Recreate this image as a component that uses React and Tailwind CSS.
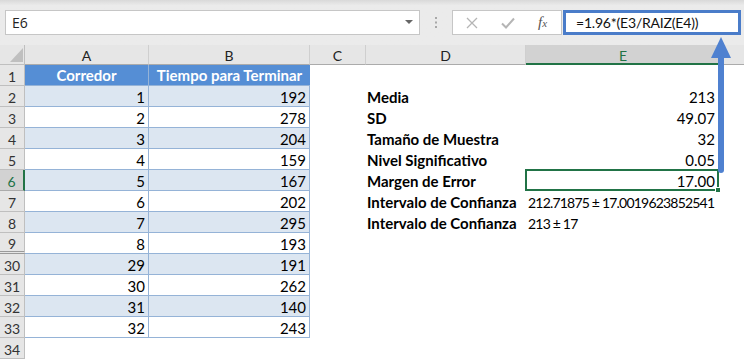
import React from "react";

const rows = [
  { n: 2, a: "1", b: "192", d: "Media", e: "213", band: true },
  { n: 3, a: "2", b: "278", d: "SD", e: "49.07" },
  { n: 4, a: "3", b: "204", d: "Tamaño de Muestra", e: "32", band: true },
  { n: 5, a: "4", b: "159", d: "Nivel Significativo", e: "0.05" },
  { n: 6, a: "5", b: "167", d: "Margen de Error", e: "17.00", band: true, sel: true },
  { n: 7, a: "6", b: "202", d: "Intervalo de Confianza", e: "212.71875 ± 17.0019623852541", left: true },
  { n: 8, a: "7", b: "295", d: "Intervalo de Confianza", e: "213 ± 17", left: true, band: true },
  { n: 9, a: "8", b: "193", hidden: true },
  { n: 30, a: "29", b: "191", band: true },
  { n: 31, a: "30", b: "262" },
  { n: 32, a: "31", b: "140", band: true },
  { n: 33, a: "32", b: "243" },
];

const cellFont = { fontFamily: "Lato, 'Open Sans', sans-serif" };

function RowHeader({ n, sel, hidden }) {
  return (
    <div
      className={
        "w-[25px] shrink-0 flex items-center justify-center text-[14px] border-b border-r " +
        (sel
          ? "bg-[#d2d2d2] text-[#217346] border-r-[#217346] border-r-2 border-b-[#ababab]"
          : "bg-[#e6e6e6] text-[#333] border-[#bfbfbf]") +
        (hidden ? " border-b-[3px] border-double border-b-[#9a9a9a]" : "")
      }
      style={cellFont}
    >
      <span className="pt-[2px]">{n}</span>
    </div>
  );
}

export default function App() {
  return (
    <div
      className="relative w-[744px] h-[359px] overflow-hidden bg-white text-black"
      style={cellFont}
    >
      {/* top formula bar */}
      <div className="h-[45px] bg-gradient-to-b from-[#d9d9d9] via-[#ebebeb] via-[12%] to-[#ebebeb] flex items-start pt-[10px] pl-[5px]">
        <div
          className="w-[415px] h-[25px] bg-white border border-[#c6c6c6] flex items-center justify-between pl-[6px] pr-[6px] text-[14px] text-[#222]"
          style={{ fontFamily: "'Open Sans', sans-serif" }}
        >
          <span>E6</span>
          <svg width="8" height="5" viewBox="0 0 8 5">
            <path d="M0 0 L8 0 L4 4 Z" fill="#666" />
          </svg>
        </div>
        <div className="w-[32px] h-[25px] flex items-center justify-center">
          <svg width="4" height="13" viewBox="0 0 4 13">
            <rect x="1" y="1" width="2" height="2" fill="#a8a8a8" />
            <rect x="1" y="5.5" width="2" height="2" fill="#a8a8a8" />
            <rect x="1" y="10" width="2" height="2" fill="#a8a8a8" />
          </svg>
        </div>
        <div className="w-[110px] h-[25px] bg-white border border-[#c6c6c6] flex items-center">
          <div className="w-[36px] flex justify-center pl-[2px]">
            <svg width="12" height="12" viewBox="0 0 12 12">
              <path d="M1 1 L11 11 M11 1 L1 11" stroke="#b5b5b5" strokeWidth="1.3" />
            </svg>
          </div>
          <div className="w-[37px] flex justify-center">
            <svg width="14" height="12" viewBox="0 0 14 12">
              <path d="M1 6.5 L5 10.5 L13 1.5" stroke="#b5b5b5" strokeWidth="2" fill="none" />
            </svg>
          </div>
          <div
            className="flex-1 flex justify-center italic text-[15px] text-[#555] pr-[2px]"
            style={{ fontFamily: "'Liberation Serif', serif" }}
          >
            <span>
              f<span className="text-[11px]">x</span>
            </span>
          </div>
        </div>
        <div className="ml-[1px] w-[178px] h-[25px] bg-white border-[3px] border-[#4a7cc9] flex items-center pl-[10px] text-[14px] tracking-[-0.2px] text-[#111]">
          =1.96*(E3/RAIZ(E4))
        </div>
      </div>

      {/* column headers */}
      <div className="h-[20px] flex bg-[#e6e6e6] text-[14px] text-[#222]">
        <div className="w-[25px] shrink-0 border-r border-b border-[#bfbfbf] relative">
          <svg className="absolute left-[10px] top-[3px]" width="13" height="14" viewBox="0 0 13 14">
            <path d="M13 0 L13 14 L0 14 Z" fill="#bfbfbf" />
          </svg>
        </div>
        <div className="w-[124px] shrink-0 border-r border-b border-r-[#cfcfcf] border-b-[#ababab] flex items-center justify-center pt-[2px]">A</div>
        <div className="w-[161px] shrink-0 border-r border-b border-r-[#cfcfcf] border-b-[#ababab] flex items-center justify-center pt-[2px]">B</div>
        <div className="w-[56px] shrink-0 border-r border-b border-r-[#cfcfcf] border-b-[#ababab] flex items-center justify-center pt-[2px]">C</div>
        <div className="w-[160px] shrink-0 border-r border-b border-r-[#cfcfcf] border-b-[#ababab] flex items-center justify-center pt-[2px]">D</div>
        <div className="w-[194px] shrink-0 border-b-2 border-b-[#217346] bg-[#d2d2d2] text-[#217346] flex items-center justify-center pt-[2px]">E</div>
        <div className="flex-1 border-b border-b-[#ababab] border-l border-l-[#cfcfcf]"></div>
      </div>

      {/* row 1 */}
      <div className="h-[21px] flex">
        <RowHeader n={1} />
        <div className="w-[124px] shrink-0 bg-[#558ed5] text-white font-bold text-[15px] flex items-center justify-center border-r border-b border-[#95b3d7] pt-[1px]">
          Corredor
        </div>
        <div className="w-[161px] shrink-0 bg-[#558ed5] text-white font-bold text-[15px] flex items-center justify-center border-b border-[#95b3d7] pt-[1px]">
          Tiempo para Terminar
        </div>
        <div className="flex-1"></div>
      </div>

      {rows.map((r) => (
        <div key={r.n} className="h-[21px] flex text-[15px]">
          <RowHeader n={r.n} sel={r.sel} hidden={r.hidden} />
          <div
            className={
              "w-[124px] shrink-0 flex items-center justify-end pr-[3px] pt-[2px] border-r border-b border-[#95b3d7] " +
              (r.band ? "bg-[#dce6f1]" : "bg-white")
            }
          >
            {r.a}
          </div>
          <div
            className={
              "w-[161px] shrink-0 flex items-center justify-end pr-[3px] pt-[2px] border-r border-b border-[#95b3d7] " +
              (r.band ? "bg-[#dce6f1]" : "bg-white")
            }
          >
            {r.b}
          </div>
          <div className="w-[55px] shrink-0"></div>
          <div className="w-[160px] shrink-0 flex items-center pl-[2px] pt-[2px] font-bold whitespace-nowrap">
            {r.d}
          </div>
          {r.sel ? (
            <div className="relative w-[194px] shrink-0 h-[22px] -mt-[1px] border-2 border-[#217346] flex items-center justify-end pr-[2px] pt-[2px]">
              {r.e}
              <div className="absolute -right-[4px] -bottom-[4px] w-[6px] h-[6px] bg-[#217346] border border-white"></div>
            </div>
          ) : r.left ? (
            <div className="w-[194px] shrink-0 flex items-center pt-[2px] whitespace-nowrap justify-start pl-[3px] text-[14px] tracking-[-0.8px]">
              {r.e}
            </div>
          ) : (
            <div className="w-[194px] shrink-0 flex items-center pt-[2px] whitespace-nowrap justify-end pr-[4px]">
              {r.e}
            </div>
          )}
          <div className="flex-1"></div>
        </div>
      ))}

      <div className="h-[21px] flex">
        <RowHeader n={34} />
      </div>

      {/* arrow overlay */}
      <svg
        className="absolute left-[710px] top-[37px]"
        width="22"
        height="140"
        viewBox="0 0 22 140"
      >
        <path d="M11 0 L21 21 L1 21 Z" fill="#4f81d0" />
        <rect x="8" y="18" width="6" height="118" rx="3" fill="#4f81d0" />
      </svg>
    </div>
  );
}
